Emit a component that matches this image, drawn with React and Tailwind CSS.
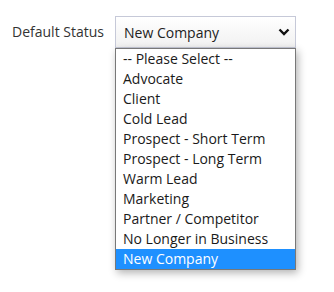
import React from "react";

const options = [
  "-- Please Select --",
  "Advocate",
  "Client",
  "Cold Lead",
  "Prospect - Short Term",
  "Prospect - Long Term",
  "Warm Lead",
  "Marketing",
  "Partner / Competitor",
  "No Longer in Business",
  "New Company",
];

const selected = "New Company";

export default function App() {
  return (
    <div
      className="w-[334px] h-[292px] bg-white pt-4 pl-3"
      style={{ fontFamily: '"Open Sans", sans-serif' }}
    >
      <div className="flex items-center">
        <label className="w-[103px] text-[14px] leading-5 text-[#333333]">
          Default Status
        </label>
        <div className="relative">
          <div className="flex items-center justify-between w-[181px] h-8 pl-2 pr-[4px] border border-[#c6c9d8] bg-gradient-to-b from-white to-[#f1f1f1] text-[14px] text-[#222222]">
            <span>{selected}</span>
            <svg width="12" height="8" viewBox="0 0 12 8" className="mr-[1px]">
              <polyline
                points="1.5,1.5 6,6 10.5,1.5"
                fill="none"
                stroke="#111"
                strokeWidth="2.4"
              />
            </svg>
          </div>
          <ul className="absolute left-0 top-[32px] w-[181px] border border-[#787878] bg-white shadow-[2px_3px_8px_rgba(0,0,0,0.3)]">
            {options.map((opt) => (
              <li
                key={opt}
                className={
                  opt === selected
                    ? "h-5 pl-[7px] text-[14px] leading-5 bg-[#1e90ff] text-white"
                    : "h-5 pl-[7px] text-[14px] leading-5 text-[#1a1a1a]"
                }
              >
                {opt}
              </li>
            ))}
          </ul>
        </div>
      </div>
    </div>
  );
}
